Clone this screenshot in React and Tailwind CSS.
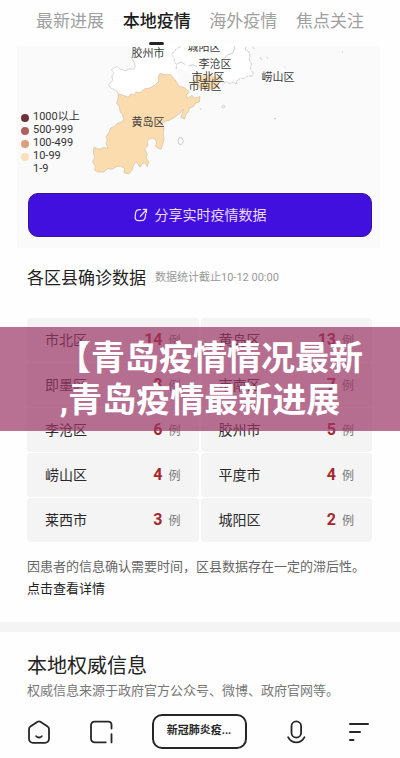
import React, { useState } from "react";

const tabs = ["最新进展", "本地疫情", "海外疫情", "焦点关注"];

const legend = [
  { label: "1000以上", dot: "bg-[#6b3338]" },
  { label: "500-999", dot: "bg-[#b0615f]" },
  { label: "100-499", dot: "bg-[#dc9f7c]" },
  { label: "10-99", dot: "bg-[#fbe0bd]" },
  { label: "1-9", dot: "bg-transparent" },
];

const districts = [
  { name: "市北区", count: 14 },
  { name: "黄岛区", count: 13 },
  { name: "即墨区", count: 8 },
  { name: "市南区", count: 7 },
  { name: "李沧区", count: 6 },
  { name: "胶州市", count: 5 },
  { name: "崂山区", count: 4 },
  { name: "平度市", count: 4 },
  { name: "莱西市", count: 3 },
  { name: "城阳区", count: 2 },
];

function Tabs() {
  const [active, setActive] = useState("本地疫情");

  return (
    <nav className="flex justify-between px-9 pt-[9px] pb-px">
      {tabs.map((tab) => (
        <button
          key={tab}
          type="button"
          onClick={() => setActive(tab)}
          className="flex flex-col items-center gap-[9px]"
        >
          <span
            className={
              tab === active
                ? "text-[17px] leading-6 font-medium text-[#1c1c1c]"
                : "text-[17px] leading-6 text-[#a0a0a0]"
            }
          >
            {tab}
          </span>
          <span
            className={
              tab === active
                ? "h-[3px] w-[15px] rounded-full bg-[#262626]"
                : "h-[3px] w-[15px]"
            }
          />
        </button>
      ))}
    </nav>
  );
}

function DistrictMap() {
  return (
    <svg
      viewBox="0 0 363 144"
      className="col-start-1 row-start-1 w-full"
      role="img"
      aria-label="青岛"
    >
      <g transform="translate(-17 -6) scale(0.3333)" strokeLinejoin="round">
        {/* 胶州市 */}
        <path
          d="M355 162 L350 152 L332 144 L326 134 L338 122 L336 108 L342 98 L334 90 L340 84 L352 80 L362 88 L378 92 L390 86 L402 88 L406 80 L402 66 L392 56 L394 10 L520 10 L514 42 L524 58 L522 70 L530 82 L526 96 L534 106 L530 126 L510 106 L480 100 L476 124 L465 135 L435 146 L420 155 L392 160 L385 168 Z"
          fill="#fff"
        />
        <path
          d="M355 162 L350 152 L332 144 L326 134 L338 122 L336 108 L342 98 L334 90 L340 84 L352 80 L362 88 L378 92 L390 86 L402 88 L406 80 L402 66 L394 52"
          fill="none"
          stroke="#c4c4c4"
          strokeWidth="2"
        />
        {/* 城阳区, 李沧区, 崂山区 */}
        <path
          d="M520 10 L514 42 L524 58 L522 70 L530 82 L560 92 L580 110 L600 130 L665 132 L680 124 L700 130 L712 118 L735 116 L757 104 L754 70 L748 50 L742 10 Z"
          fill="#fff"
        />
        <g fill="none" stroke="#b5b5b5" strokeWidth="2">
          <path
            d="M542 20 L530 26 L522 36 L514 42 L524 58 L522 66 L530 74 L528 90"
            strokeDasharray="10 3"
          />
          <path d="M530 72 L545 66 L556 74 M566 78 L580 74 L590 80" />
          <path d="M612 62 L622 56 L636 60 L650 56 M672 56 L684 44 L698 40 L704 26 L702 18" />
          <path
            d="M738 20 L736 30 L746 34 L750 48 L748 60 L754 70 L752 88 L760 100 L756 108 L742 108 L735 116 L722 114 L712 122 L708 132 L700 126 L690 132 L680 124 L668 132"
            strokeDasharray="12 2"
          />
          <path d="M758 22 L764 26 M780 52 L786 60 M800 50 L804 56 M670 196 a4 4 0 1 0 1 0 M824 234 a2 2 0 1 0 1 0 M1028 34 v4 M600 204 l4 6 M854 80 l2 2" />
          <path d="M538 292 L546 294 L550 304 L544 314 L536 312 L534 302 Z" />
        </g>
        {/* 市北区, 市南区 */}
        <path
          d="M586 112 L600 104 L630 106 L664 112 L666 126 L650 134 L660 144 L636 148 L600 146 L584 132 Z"
          fill="#fbdcae"
        />
        {/* 黄岛区 */}
        <path
          d="M355 162 L370 166 L385 172 L392 162 L404 164 L408 156 L420 158 L435 146 L450 144 L465 135 L476 124 L474 112 L480 100 L496 104 L512 104 L522 116 L530 126 L536 138 L553 143 L568 156 L560 164 L562 176 L576 166 L584 174 L600 170 L598 186 L586 190 L580 200 L568 204 L566 214 L558 222 L554 237 L542 232 L548 218 L550 208 L538 222 L524 232 L510 240 L496 244 L486 250 L492 262 L490 280 L492 298 L488 314 L483 328 L472 324 L466 318 A14 14 0 1 0 444 316 L434 328 L442 342 L438 354 L446 364 L442 380 L434 368 L426 372 L420 382 L410 366 L402 372 L396 390 L386 402 L372 398 L374 384 L360 378 L348 380 L338 388 L322 386 L312 396 L292 396 L284 390 L286 378 L278 366 L284 352 L280 336 L282 322 L300 328 L310 322 L324 326 L318 310 L322 300 L318 290 L328 276 L332 264 L346 258 L352 250 L366 246 L372 236 L366 222 L360 214 L358 200 L350 190 L354 176 Z"
          fill="#fbdcae"
          stroke="#d3bd9b"
          strokeWidth="2"
        />
      </g>
      <g fontSize="11" fill="#3c3c3c" textAnchor="middle">
        <text x="131" y="11">胶州市</text>
        <text x="187" y="5">城阳区</text>
        <text x="198" y="22">李沧区</text>
        <text x="188" y="44">市南区</text>
        <text x="191" y="35">市北区</text>
        <text x="261" y="35">崂山区</text>
        <text x="131" y="80">黄岛区</text>
      </g>
    </svg>
  );
}

function MapCard() {
  return (
    <section className="mr-5 ml-[17px] bg-[#fafafa] pb-[11px]">
      <div className="grid">
        <DistrictMap />
        <ul className="col-start-1 row-start-1 mb-[15px] ml-1 self-end">
          {legend.map((item) => (
            <li
              key={item.label}
              className="flex items-center gap-1 text-[11px] leading-[13px] text-[#333]"
            >
              <span className={`mt-[3px] size-2 rounded-full ${item.dot}`} />
              {item.label}
            </li>
          ))}
        </ul>
      </div>
      <div className="mt-[3px] mr-2 ml-[11px]">
        <button
          type="button"
          className="flex h-11 w-full items-center justify-center gap-[7px] rounded-[10px] border border-[#35159c] bg-[#4110de] text-[14px] text-[#e9d9fb]"
        >
          <svg
            viewBox="0 0 14 14"
            className="size-[14px]"
            fill="none"
            stroke="currentColor"
            strokeWidth="1.3"
            strokeLinecap="round"
            strokeLinejoin="round"
          >
            <path d="M6.6 1.6H5.4C3 1.6 1.9 2.7 1.6 5L1.2 8.5C.9 11.3 2 12.6 4.8 12.6H7.2C9.8 12.6 11 11.5 11.3 9L11.7 5.8" />
            <path d="M6.4 8.2 12.4 1.7M9.3 1.4 12.6 1.5 12.3 4.6" />
          </svg>
          分享实时疫情数据
        </button>
      </div>
    </section>
  );
}

function DistrictList() {
  return (
    <ul className="mt-[27px] grid grid-cols-2 gap-x-0.5 gap-y-px">
      {districts.map((item) => (
        <li
          key={item.name}
          className="flex h-11 items-center justify-between rounded-sm bg-[#f4f4f4] px-[18px]"
        >
          <span className="text-[14px] text-[#2a2a2a]">{item.name}</span>
          <span className="flex items-baseline gap-[6px]">
            <b className="text-[16px] font-bold text-[#a5282c]">{item.count}</b>
            <span className="text-[12px] text-[#777]">例</span>
          </span>
        </li>
      ))}
    </ul>
  );
}

function BottomBar() {
  return (
    <footer className="flex items-center justify-between pt-3 pr-[30px] pb-[9px] pl-7 text-[#262626]">
      <button type="button" aria-label="首页">
        <svg
          viewBox="0 0 24 24"
          className="size-6"
          fill="none"
          stroke="currentColor"
          strokeWidth="1.8"
          strokeLinecap="round"
          strokeLinejoin="round"
        >
          <path d="M9.6 1.8 2.4 6.6A3 3 0 0 0 1 9.2v9.6a4 4 0 0 0 4 4h12a4 4 0 0 0 4-4V9.2a3 3 0 0 0-1.4-2.6l-7.2-4.8a2.5 2.5 0 0 0-2.8 0Z" />
          <path d="M8.2 16.2c1.4 1.7 4.2 1.7 5.6 0" />
        </svg>
      </button>
      <button type="button" aria-label="窗口">
        <svg
          viewBox="0 0 24 24"
          className="size-6"
          fill="none"
          stroke="currentColor"
          strokeWidth="1.8"
          strokeLinecap="round"
        >
          <path d="M21.5 8.5V4.6a3 3 0 0 0-3-3h-14A3.5 3.5 0 0 0 1 5.1v13.6a3.7 3.7 0 0 0 3.7 3.7h11M21.5 14.2v8.2" />
        </svg>
      </button>
      <button
        type="button"
        className="h-[35px] w-[95px] rounded-[10px] border-2 border-[#262626] text-[11px] font-bold"
      >
        新冠肺炎疫...
      </button>
      <button type="button" aria-label="语音">
        <svg
          viewBox="0 0 24 24"
          className="size-6"
          fill="none"
          stroke="currentColor"
          strokeWidth="1.8"
          strokeLinecap="round"
        >
          <rect x="7.5" y="1.4" width="9.6" height="16.2" rx="4.8" />
          <path d="M4.1 17.2c3.6 7 12.8 7 16.4 0" />
        </svg>
      </button>
      <button type="button" aria-label="菜单">
        <svg
          viewBox="0 0 24 24"
          className="size-6"
          fill="none"
          stroke="currentColor"
          strokeWidth="2"
          strokeLinecap="round"
        >
          <path d="M4 4h18M4 12h10M4 20h3.5" />
        </svg>
      </button>
    </footer>
  );
}

function App() {
  return (
    <div className="relative bg-[#fefefe] font-[Roboto,'Noto_Sans_CJK_SC',sans-serif]">
      <Tabs />
      <MapCard />

      <section className="mt-[17px] pr-7 pl-[27px]">
        <div className="flex items-center gap-[9px]">
          <h2 className="text-[17px] leading-[26px] text-[#222]">
            各区县确诊数据
          </h2>
          <span className="text-[11px] text-[#999]">
            数据统计截止10-12 00:00
          </span>
        </div>
        <DistrictList />
        <p className="mt-[14px] text-[13px] leading-[22px] whitespace-nowrap text-[#666]">
          因患者的信息确认需要时间，区县数据存在一定的滞后性。
        </p>
        <a href="#detail" className="block text-[13px] leading-[22px] text-[#222]">
          点击查看详情
        </a>
      </section>

      <div className="mt-[22px] h-[10px] bg-[#f4f4f4]" />

      <section className="mt-5 pl-[27px]">
        <h2 className="text-[20px] leading-7 text-[#222]">本地权威信息</h2>
        <p className="text-[13px] leading-[22px] text-[#777]">
          权威信息来源于政府官方公众号、微博、政府官网等。
        </p>
      </section>

      <BottomBar />

      {/* Title banner over the list */}
      <div className="absolute inset-x-0 top-[327px] bg-[#9a3464]/70 py-[10px]">
        <h1 className="indent-5 text-center text-[34px] leading-[42px] font-bold text-white">
          【青岛疫情情况最新
          <br />
          ,青岛疫情最新进展
        </h1>
      </div>
    </div>
  );
}

export default App;
